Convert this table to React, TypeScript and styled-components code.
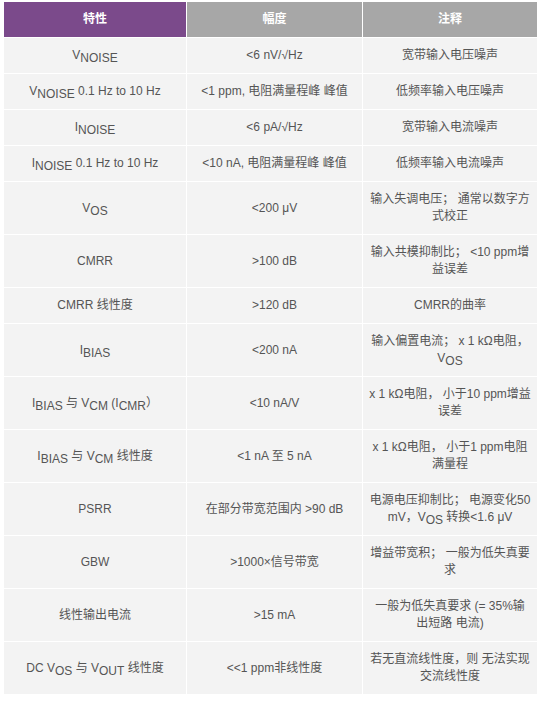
import React from 'react';
import styled, { createGlobalStyle } from 'styled-components';

const GlobalStyle = createGlobalStyle`
    html, body {
        margin: 0;
        padding: 0;
        background: #ffffff;
    }
    body {
        font-family: 'Liberation Sans', Arial, 'Noto Sans CJK SC', sans-serif;
    }
`;

const Page = styled.div`
    padding: 1px 4px 0 3px;
`;

const Table = styled.table`
    width: 535px;
    table-layout: fixed;
    border-collapse: separate;
    border-spacing: 1px;
    background: #ffffff;
    font-size: 12px;
    color: #555555;
`;

const HeadCell = styled.th<{ $accent?: boolean }>`
    height: 17px;
    padding: 9px 6px;
    line-height: 17px;
    font-weight: bold;
    color: #ffffff;
    text-align: center;
    background: ${({ $accent }) => ($accent ? '#7b4a8b' : '#a7a7a7')};
`;

const Cell = styled.td`
    padding: 9px 6px;
    line-height: 17px;
    text-align: center;
    vertical-align: middle;
    background: #f3f3f3;
`;

const Sub = styled.span`
    display: inline;
    vertical-align: -3px;
    line-height: 0;
`;

interface Row {
    param: React.ReactNode;
    value: React.ReactNode;
    note: React.ReactNode;
}

const rows: Row[] = [
    { param: <>V<Sub>NOISE</Sub></>, value: '<6 nV/√Hz', note: '宽带输入电压噪声' },
    { param: <>V<Sub>NOISE</Sub> 0.1 Hz to 10 Hz</>, value: '<1 ppm, 电阻满量程峰 峰值', note: '低频率输入电压噪声' },
    { param: <>I<Sub>NOISE</Sub></>, value: '<6 pA/√Hz', note: '宽带输入电流噪声' },
    { param: <>I<Sub>NOISE</Sub> 0.1 Hz to 10 Hz</>, value: '<10 nA, 电阻满量程峰 峰值', note: '低频率输入电流噪声' },
    {
        param: <>V<Sub>OS</Sub></>,
        value: '<200 μV',
        note: <>输入失调电压； 通常以数字方<br />式校正</>,
    },
    {
        param: 'CMRR',
        value: '>100 dB',
        note: <>输入共模抑制比； &lt;10 ppm增<br />益误差</>,
    },
    { param: 'CMRR 线性度', value: '>120 dB', note: 'CMRR的曲率' },
    {
        param: <>I<Sub>BIAS</Sub></>,
        value: '<200 nA',
        note: <>输入偏置电流； x 1 kΩ电阻，<br />V<Sub>OS</Sub></>,
    },
    {
        param: <>I<Sub>BIAS</Sub> 与 V<Sub>CM</Sub> (I<Sub>CMR</Sub>）</>,
        value: '<10 nA/V',
        note: <>x 1 kΩ电阻， 小于10 ppm增益<br />误差</>,
    },
    {
        param: <>I<Sub>BIAS</Sub> 与 V<Sub>CM</Sub> 线性度</>,
        value: '<1 nA 至 5 nA',
        note: <>x 1 kΩ电阻， 小于1 ppm电阻<br />满量程</>,
    },
    {
        param: 'PSRR',
        value: '在部分带宽范围内 >90 dB',
        note: <>电源电压抑制比； 电源变化50<br />mV，V<Sub>OS</Sub> 转换&lt;1.6 μV</>,
    },
    {
        param: 'GBW',
        value: '>1000×信号带宽',
        note: <>增益带宽积； 一般为低失真要<br />求</>,
    },
    {
        param: '线性输出电流',
        value: '>15 mA',
        note: <>一般为低失真要求 (= 35%输<br />出短路 电流)</>,
    },
    {
        param: <>DC V<Sub>OS</Sub> 与 V<Sub>OUT</Sub> 线性度</>,
        value: '<<1 ppm非线性度',
        note: <>若无直流线性度，则 无法实现<br />交流线性度</>,
    },
];

export default function App() {
    return (
        <Page>
            <GlobalStyle />
            <Table>
                <colgroup>
                    <col style={{ width: 182 }} />
                    <col style={{ width: 175 }} />
                    <col style={{ width: 174 }} />
                </colgroup>
                <thead>
                    <tr>
                        <HeadCell $accent>特性</HeadCell>
                        <HeadCell>幅度</HeadCell>
                        <HeadCell>注释</HeadCell>
                    </tr>
                </thead>
                <tbody>
                    {rows.map((row, i) => (
                        <tr key={i}>
                            <Cell>{row.param}</Cell>
                            <Cell>{row.value}</Cell>
                            <Cell>{row.note}</Cell>
                        </tr>
                    ))}
                </tbody>
            </Table>
        </Page>
    );
}
